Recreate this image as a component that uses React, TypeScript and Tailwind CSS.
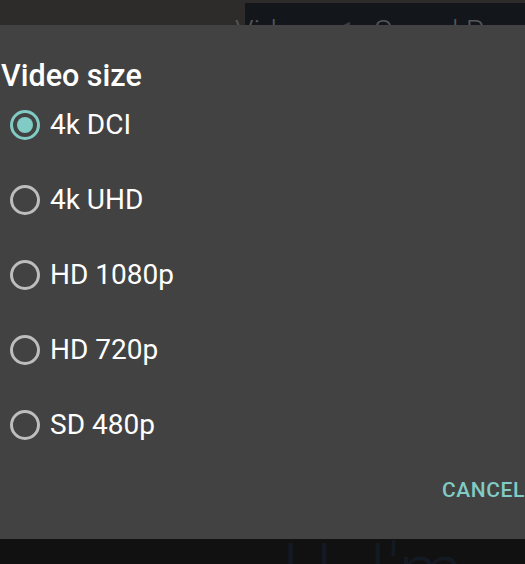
import React from "react";

const options = ["4k DCI", "4k UHD", "HD 1080p", "HD 720p", "SD 480p"];

function Radio({ checked }: { checked: boolean }) {
  return (
    <svg width="32" height="32" viewBox="0 0 32 32" className="shrink-0">
      <circle
        cx="16"
        cy="16"
        r="13.5"
        fill="none"
        stroke={checked ? "#80cbc4" : "#bdbdbd"}
        strokeWidth="3"
      />
      {checked && <circle cx="16" cy="16" r="8" fill="#80cbc4" />}
    </svg>
  );
}

export default function App() {
  return (
    <div
      className="w-[525px] h-[564px] overflow-hidden bg-[#111111] flex flex-col"
      style={{ fontFamily: "Roboto, 'Noto Sans', sans-serif" }}
    >
      {/* top background strip */}
      <div className="h-[25px] shrink-0 flex overflow-hidden bg-[#2d2c2a]">
        <div className="w-[245px] shrink-0" />
        <div className="flex-1 mt-[3px] bg-[#13161b]" />
      </div>
      <div className="h-0 relative">
        <div className="absolute left-[235px] top-[-9px] h-[9px] overflow-hidden flex items-start gap-[18px] text-[#55575b] text-[30px] leading-[30px] font-light whitespace-nowrap">
          <span>Video</span>
          <span className="text-[#3a3d42]">◀</span>
          <span className="ml-[6px]">Sound Readout</span>
        </div>
      </div>

      {/* dialog */}
      <div className="h-[514px] shrink-0 bg-[#424242] flex flex-col">
        <div className="pt-[37px] pl-[1px] text-white text-[30.5px] leading-[28px] font-medium">
          Video size
        </div>
        <div className="-mt-[3px] flex flex-col">
          {options.map((o, i) => (
            <div key={o} className="h-[75px] flex items-center pl-[9px] gap-[9px]">
              <Radio checked={i === 0} />
              <span className="text-white text-[28px] leading-[32px]">{o}</span>
            </div>
          ))}
        </div>
        <div className="mt-[16px] flex justify-end pr-[0px]">
          <span className="text-[#80cbc4] text-[21px] leading-[24px] font-medium tracking-[0.6px]">
            CANCEL
          </span>
        </div>
      </div>

      {/* bottom background strip */}
      <div className="flex-1 relative overflow-hidden">
        <div className="absolute left-[282px] top-[-4px] text-[#141a24] text-[72px] leading-[72px] font-light whitespace-nowrap">
          H&nbsp;&nbsp;I'm
        </div>
      </div>
    </div>
  );
}
